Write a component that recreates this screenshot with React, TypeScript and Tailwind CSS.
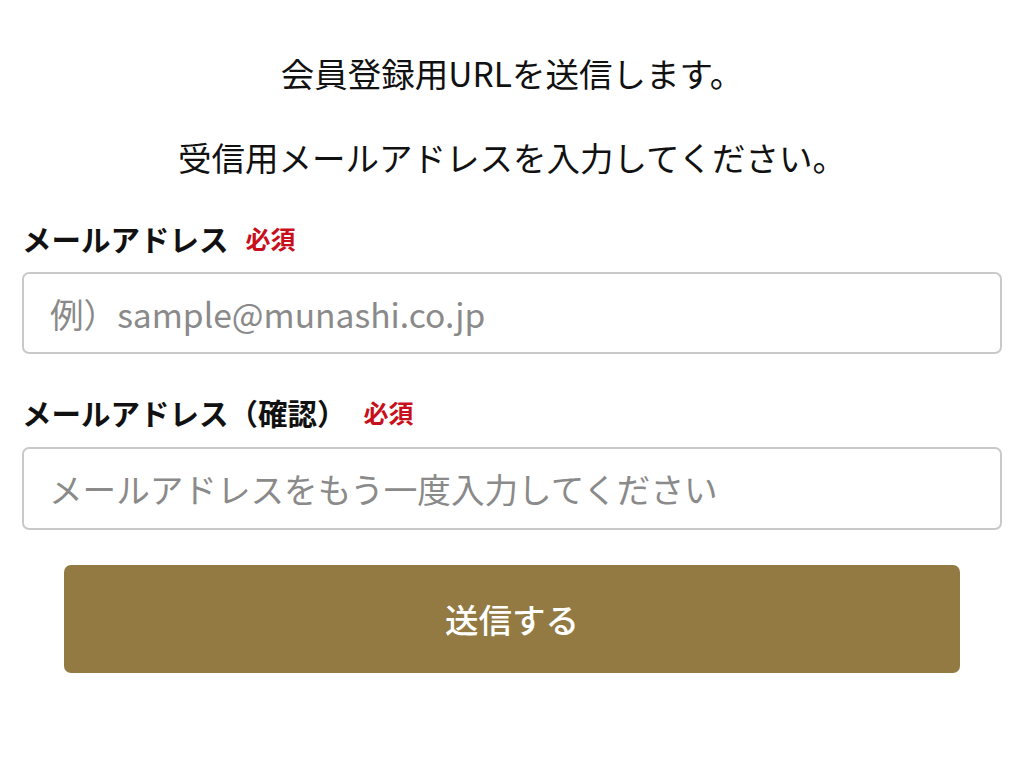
export default function App() {
  return (
    <main
      className="min-h-screen bg-white px-[22px] text-[#111]"
      style={{ fontFamily: '"Noto Sans CJK JP", "Noto Sans", sans-serif' }}
    >
      {/* 説明文 */}
      <p className="pt-[53px] text-center text-[33.5px] leading-[40px]">
        会員登録用URLを送信します。
      </p>
      <p className="mt-[44px] text-center text-[33.5px] leading-[40px]">
        受信用メールアドレスを入力してください。
      </p>

      {/* メールアドレス */}
      <div className="mt-[41px] flex items-center h-[40px]">
        <span className="text-[29.5px] font-bold leading-[40px]">メールアドレス</span>
        <span className="ml-[17px] text-[25px] font-bold leading-[40px] text-[#c8101c]">
          必須
        </span>
      </div>
      <input
        type="email"
        placeholder="例）sample@munashi.co.jp"
        className="mt-[14px] block h-[82px] w-full rounded-[7px] border-2 border-[#c9c9c9] bg-white px-[26px] text-[33.6px] outline-none placeholder:text-[#8a8a8a]"
      />

      {/* 確認 */}
      <div className="mt-[38px] flex items-center h-[40px]">
        <span className="text-[29.5px] font-bold leading-[40px]">メールアドレス（確認）</span>
        <span className="ml-[17px] text-[25px] font-bold leading-[40px] text-[#c8101c]">
          必須
        </span>
      </div>
      <input
        type="email"
        placeholder="メールアドレスをもう一度入力してください"
        className="mt-[15px] block h-[83px] w-full rounded-[7px] border-2 border-[#c9c9c9] bg-white px-[25px] text-[33.6px] outline-none placeholder:text-[#8a8a8a]"
      />

      {/* ボタン */}
      <div className="px-[42px]">
        <button className="mt-[35px] block h-[108px] w-full rounded-[7px] bg-[#937a42] text-[33.5px] font-medium text-white">
          送信する
        </button>
      </div>
    </main>
  );
}
